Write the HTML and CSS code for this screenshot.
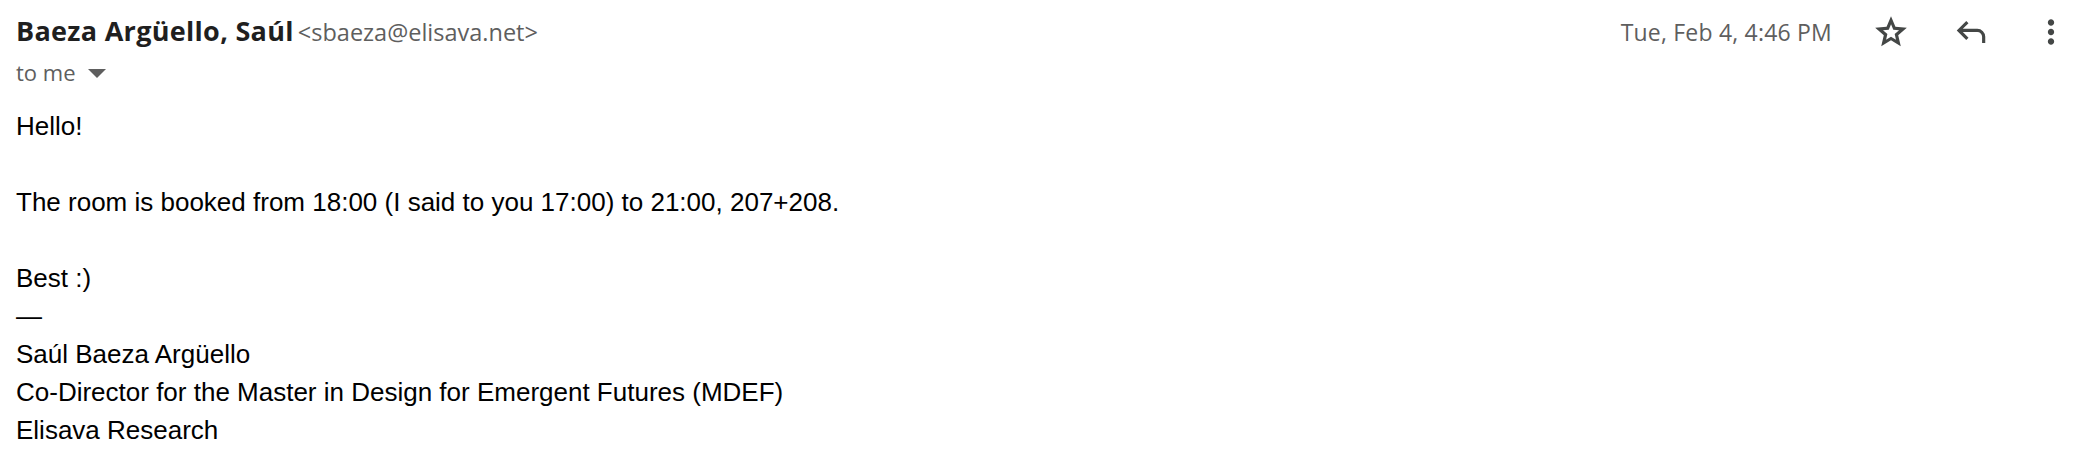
FILE: index.html
```html
<!DOCTYPE html>
<html lang="en">
<head>
<meta charset="utf-8">
<title>Email</title>
<link rel="stylesheet" href="styles.css">
</head>
<body>
<div class="message">
  <header class="head">
    <div class="who">
      <div class="from">
        <span class="name">Baeza Argüello, Saúl</span>
        <span class="addr">&lt;sbaeza@elisava.net&gt;</span>
      </div>
      <div class="to">
        <span>to me</span>
        <span class="caret"></span>
      </div>
    </div>
    <div class="meta">
      <span class="date">Tue, Feb 4, 4:46 PM</span>
      <div class="actions">
        <button class="btn" aria-label="Star">
          <svg viewBox="0 -960 960 960" class="ico"><path d="m354-287 126-76 126 77-33-144 111-96-146-13-57-136-57 135-146 13 111 97-33 143ZM233-120l65-281L80-590l288-25 112-265 112 265 288 25-218 189 65 281-247-149-247 149Z"/></svg>
        </button>
        <button class="btn" aria-label="Reply">
          <svg viewBox="0 -960 960 960" class="ico"><path d="M760-200v-160q0-50-35-85t-85-35H273l144 144-57 56-240-240 240-240 57 56-144 144h367q83 0 141.5 58.5T840-360v160h-80Z"/></svg>
        </button>
        <button class="btn" aria-label="More">
          <svg viewBox="0 -960 960 960" class="ico"><path d="M480-160q-33 0-56.5-23.5T400-240q0-33 23.5-56.5T480-320q33 0 56.5 23.5T560-240q0 33-23.5 56.5T480-160Zm0-240q-33 0-56.5-23.5T400-480q0-33 23.5-56.5T480-560q33 0 56.5 23.5T560-480q0 33-23.5 56.5T480-400Zm0-240q-33 0-56.5-23.5T400-720q0-33 23.5-56.5T480-800q33 0 56.5 23.5T560-720q0 33-23.5 56.5T480-640Z"/></svg>
        </button>
      </div>
    </div>
  </header>
  <div class="body">
    <p>Hello!</p>
    <p class="gap">The room is booked from 18:00 (I said to you 17:00) to 21:00, 207+208.</p>
    <p class="gap">Best :)</p>
    <p>—</p>
    <p>Saúl Baeza Argüello</p>
    <p>Co-Director for the Master in Design for Emergent Futures (MDEF)</p>
    <p>Elisava Research</p>
  </div>
</div>
</body>
</html>
```

FILE: styles.css
```css
html, body {
  margin: 0;
  padding: 0;
  background: #ffffff;
}

.message {
  padding: 10px 2px 0 16px;
}

.head {
  display: flex;
  justify-content: space-between;
  align-items: flex-start;
}

.who {
  display: flex;
  flex-direction: column;
  font-family: "Open Sans", Roboto, sans-serif;
}

.from {
  display: flex;
  align-items: baseline;
  gap: 4px;
  height: 42px;
}

.name {
  font-size: 27px;
  font-weight: 700;
  color: #1f1f1f;
  line-height: 42px;
  letter-spacing: 0.3px;
}

.addr {
  font-size: 23.5px;
  color: #5e5e5e;
}

.to {
  display: flex;
  align-items: center;
  gap: 12px;
  font-size: 22px;
  color: #5e5e5e;
  height: 40px;
}

.caret {
  width: 0;
  height: 0;
  border-left: 9px solid transparent;
  border-right: 9px solid transparent;
  border-top: 9px solid #5e5e5e;
  margin-top: 2px;
}

.meta {
  display: flex;
  align-items: center;
  gap: 21px;
  height: 44px;
}

.date {
  font-family: "Open Sans", Roboto, sans-serif;
  font-size: 23px;
  letter-spacing: 0.2px;
  color: #5e5e5e;
}

.actions {
  display: flex;
  gap: 5px;
}

.btn {
  width: 75px;
  height: 44px;
  padding: 0;
  border: 0;
  background: transparent;
  display: flex;
  align-items: center;
  justify-content: center;
}

.ico {
  width: 38px;
  height: 38px;
  fill: #444746;
}

.body {
  margin-top: 15px;
  font-family: "Liberation Sans", Arial, sans-serif;
  font-size: 26px;
  line-height: 38px;
  color: #000;
}

.body p {
  margin: 0;
}

.body .gap {
  margin-top: 38px;
}
```
